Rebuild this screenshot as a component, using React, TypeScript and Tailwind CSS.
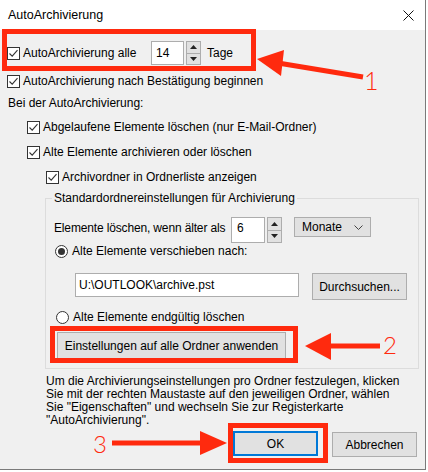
import React from 'react';

const RED = '#ff2a0e';

const CheckBox: React.FC<{ checked?: boolean }> = ({ checked = true }) => (
  <span className="w-[13px] h-[13px] border border-[#333] bg-white flex items-center justify-center shrink-0">
    {checked && (
      <svg width="11" height="11" viewBox="0 0 11 11">
        <path d="M1.5 5.5 L4.2 8.2 L9.5 2.2" fill="none" stroke="#333" strokeWidth="1.1" />
      </svg>
    )}
  </span>
);

const Radio: React.FC<{ checked?: boolean }> = ({ checked }) => (
  <span className="w-[13px] h-[13px] rounded-full border border-[#333] bg-white flex items-center justify-center shrink-0">
    {checked && <span className="w-[7px] h-[7px] rounded-full bg-[#333]" />}
  </span>
);

const Check: React.FC<{ label: string }> = ({ label }) => (
  <div className="flex items-center h-[16px]">
    <CheckBox />
    <span className="ml-[3px]">{label}</span>
  </div>
);

const Spinner: React.FC<{ h: number }> = ({ h }) => (
  <div className={`flex flex-col w-[15px] ${h === 24 ? 'h-[24px]' : 'h-[26px]'}`}>
    <div className="flex-1 border border-[#adadad] bg-[#e1e1e1] flex items-center justify-center">
      <svg width="7" height="4" viewBox="0 0 7 4"><path d="M3.5 0 L7 4 L0 4 Z" fill="#222" /></svg>
    </div>
    <div className="flex-1 border border-t-0 border-[#adadad] bg-[#e1e1e1] flex items-center justify-center">
      <svg width="7" height="4" viewBox="0 0 7 4"><path d="M0 0 L7 0 L3.5 4 Z" fill="#222" /></svg>
    </div>
  </div>
);

const RedBox: React.FC<{ className: string }> = ({ className }) => (
  <div className={`absolute border-[5px] border-[#ff2a0e] pointer-events-none ${className}`} />
);

export default function App() {
  return (
    <div
      className="relative w-[428px] h-[472px] overflow-hidden bg-white text-[12px] text-black"
      style={{ fontFamily: '"Liberation Sans", Arial, sans-serif' }}
    >
      {/* dialog */}
      <div className="w-[426px] h-[470px] border-r border-b border-[#7a7a7a] flex flex-col">
        {/* title bar */}
        <div className="h-[30px] bg-white flex items-center justify-between pl-[8px] pr-[11px] shrink-0">
          <span className="text-[12.5px]">AutoArchivierung</span>
          <svg width="11" height="11" viewBox="0 0 11 11">
            <path d="M0.5 0.5 L10.5 10.5 M10.5 0.5 L0.5 10.5" stroke="#111" strokeWidth="1" />
          </svg>
        </div>

        {/* body */}
        <div className="flex-1 bg-[#f0f0f0] flex flex-col">
          <div className="flex items-center h-[24px] mt-[11px] pl-[7px]">
            <CheckBox />
            <span className="ml-[3px] w-[128px]">AutoArchivierung alle</span>
            <div className="w-[33px] h-[24px] bg-white border border-[#adadad] pl-[4px] pt-[2px]">14</div>
            <div className="ml-[2px]"><Spinner h={24} /></div>
            <span className="ml-[6px]">Tage</span>
          </div>

          <div className="mt-[8px] pl-[7px]"><Check label="AutoArchivierung nach Bestätigung beginnen" /></div>

          <div className="mt-[6px] pl-[8px] h-[16px] flex items-center">Bei der AutoArchivierung:</div>

          <div className="mt-[8px] pl-[27px]"><Check label="Abgelaufene Elemente löschen (nur E-Mail-Ordner)" /></div>
          <div className="mt-[9px] pl-[27px]"><Check label="Alte Elemente archivieren oder löschen" /></div>
          <div className="mt-[9px] pl-[46px]"><Check label="Archivordner in Ordnerliste anzeigen" /></div>

          {/* group box */}
          <div className="mt-[13px] ml-[45px] w-[374px] h-[171px] border border-[#dcdcdc] flex flex-col">
            <div className="-mt-[9px] h-[16px] flex items-center">
              <span className="ml-[6px] px-[2px] bg-[#f0f0f0]">Standardordnereinstellungen für Archivierung</span>
            </div>

            <div className="mt-[11px] pl-[8px] flex items-start h-[26px]">
              <span className="w-[177px] h-[22px] flex items-center tracking-[-0.15px]">Elemente löschen, wenn älter als</span>
              <div className="w-[34px] h-[26px] bg-white border border-[#adadad] pl-[5px] pt-[1px]">6</div>
              <div className="ml-[2px]"><Spinner h={26} /></div>
              <div className="ml-[12px] w-[77px] h-[20px] bg-[#e1e1e1] border border-[#adadad] flex items-center justify-between pl-[7px] pr-[7px]">
                <span>Monate</span>
                <svg width="9" height="5" viewBox="0 0 9 5"><path d="M0.5 0.5 L4.5 4.5 L8.5 0.5" fill="none" stroke="#444" strokeWidth="1" /></svg>
              </div>
            </div>

            <div className="pl-[9px] h-[16px] flex items-center">
              <Radio checked />
              <span className="ml-[4px]">Alte Elemente verschieben nach:</span>
            </div>

            <div className="mt-[14px] ml-[29px] flex items-start">
              <div className="w-[224px] h-[24px] bg-white border border-[#adadad] pl-[3px] flex items-center">U:\OUTLOOK\archive.pst</div>
              <div className="ml-[13px] w-[95px] h-[27px] bg-[#e1e1e1] border border-[#adadad] flex items-center justify-center">Durchsuchen...</div>
            </div>

            <div className="mt-[9px] pl-[10px] h-[16px] flex items-center">
              <Radio />
              <span className="ml-[4px]">Alte Elemente endgültig löschen</span>
            </div>

            <div className="mt-[7px] ml-[11px] w-[229px] h-[27px] bg-[#e1e1e1] border border-[#adadad] flex items-center justify-center">
              Einstellungen auf alle Ordner anwenden
            </div>
          </div>

          <p className="mt-[6px] pl-[46px] leading-[13px]">
            Um die Archivierungseinstellungen pro Ordner festzulegen, klicken<br />
            Sie mit der rechten Maustaste auf den jeweiligen Ordner, wählen<br />
            Sie "Eigenschaften" und wechseln Sie zur Registerkarte<br />
            "AutoArchivierung".
          </p>

          <div className="mt-[4px] flex justify-end items-start pr-[8px] gap-[14px]">
            <div className="w-[85px] h-[25px] bg-[#e1e1e1] border-2 border-[#0078d7] flex items-center justify-center">OK</div>
            <div className="w-[85px] h-[25px] mt-[1px] bg-[#e1e1e1] border border-[#adadad] flex items-center justify-center">Abbrechen</div>
          </div>
        </div>
      </div>

      {/* annotations */}
      <RedBox className="left-[2px] top-[29px] w-[254px] h-[42px]" />
      <RedBox className="left-[50px] top-[326px] w-[248px] h-[37px]" />
      <RedBox className="left-[228px] top-[423px] w-[100px] h-[40px]" />

      <svg className="absolute left-0 top-0 pointer-events-none" width="428" height="472" viewBox="0 0 428 472">
        <line x1="278" y1="63" x2="363" y2="77" stroke={RED} strokeWidth="5" />
        <polygon points="257,59 284,50 281,76" fill={RED} />
        <line x1="328" y1="346" x2="380" y2="346" stroke={RED} strokeWidth="5" />
        <polygon points="305,346 331,333 331,360" fill={RED} />
        <line x1="112" y1="443" x2="202" y2="443" stroke={RED} strokeWidth="5" />
        <polygon points="227,443 200,431 200,455" fill={RED} />
      </svg>
      <span
        className="absolute left-[364px] top-[68px] text-[25px] leading-[25px] font-light text-[#ff2a0e]"
        style={{ fontFamily: 'Lato, "Liberation Sans", sans-serif' }}
      >1</span>
      <span
        className="absolute left-[383px] top-[333px] text-[24px] leading-[24px] font-light text-[#ff2a0e]"
        style={{ fontFamily: 'Lato, "Liberation Sans", sans-serif' }}
      >2</span>
      <span
        className="absolute left-[93px] top-[432px] text-[24px] leading-[24px] font-light text-[#ff2a0e]"
        style={{ fontFamily: 'Lato, "Liberation Sans", sans-serif' }}
      >3</span>
    </div>
  );
}
